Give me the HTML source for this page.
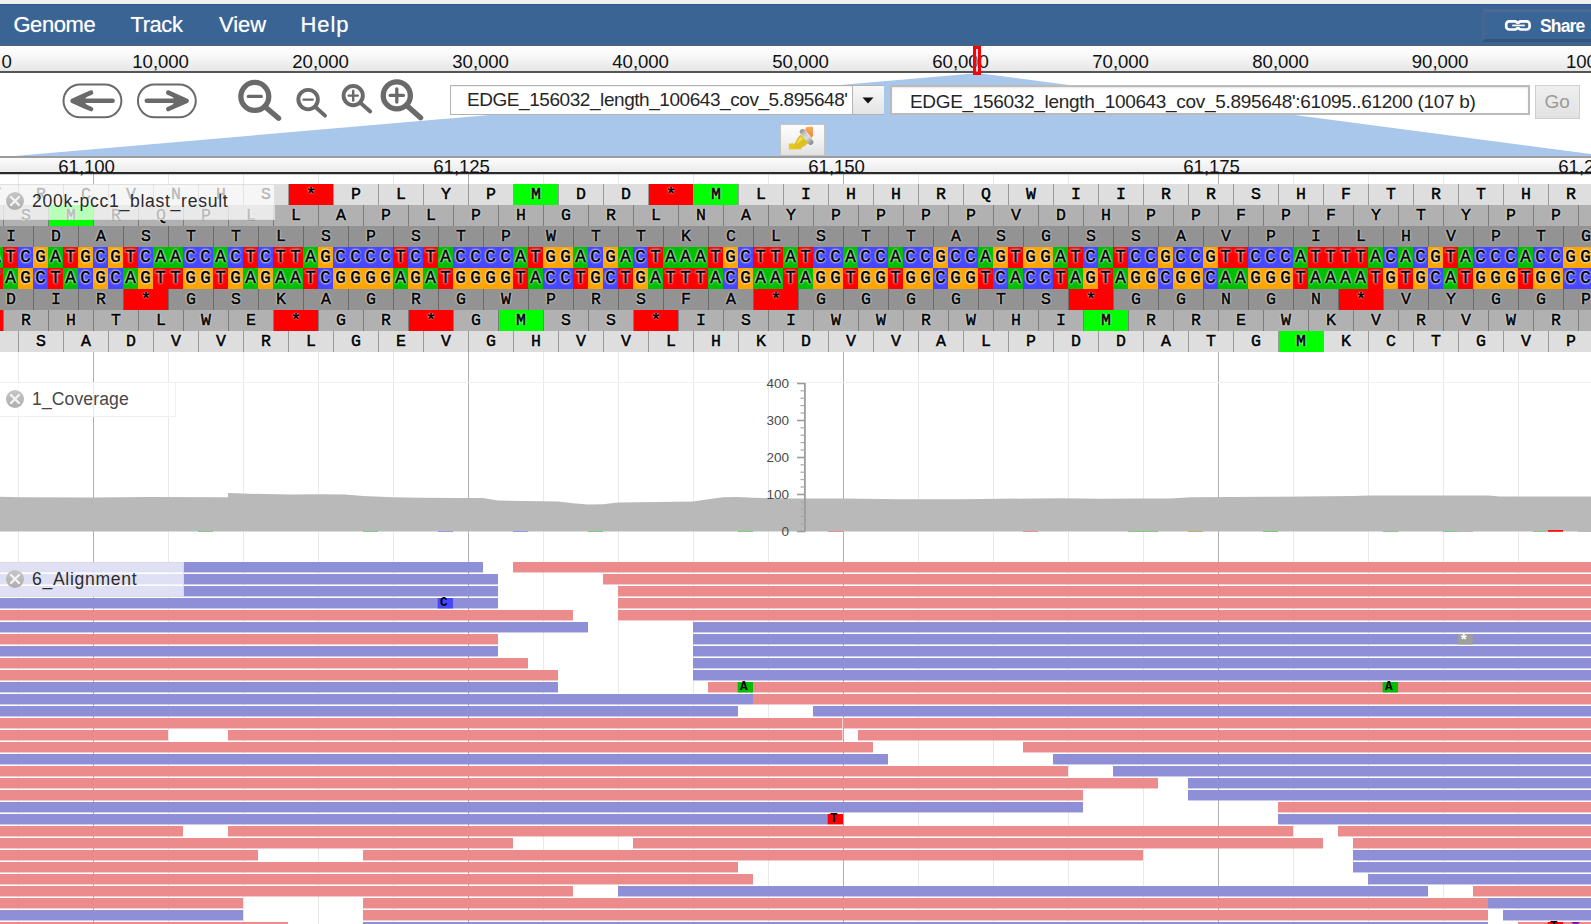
<!DOCTYPE html><html><head><meta charset="utf-8"><title>JBrowse</title><style>
html,body{margin:0;padding:0;}
body{width:1591px;height:924px;overflow:hidden;position:relative;background:#fff;font-family:"Liberation Sans",sans-serif;}
.abs{position:absolute;}
#top{left:0;top:0;width:1591px;height:4px;background:#f0f0f0;border-bottom:0;}
#menubar{left:0;top:4px;width:1591px;height:41px;background:#396494;border-top:1px solid #2f5a90;border-bottom:1px solid #56606c;box-sizing:border-box;height:42px;}
.menu{position:absolute;top:6.6px;color:#fff;font-size:22px;letter-spacing:-0.65px;line-height:26px;white-space:nowrap;text-shadow:0 0 1px rgba(255,255,255,0.55);}
#overview{left:0;top:46px;width:1591px;height:25px;background:linear-gradient(#ffffff,#fcfcfc 25%,#e6e6e6);border-bottom:2px solid #555;box-sizing:content-box;}
.ovl{position:absolute;top:4.9px;font-size:18.6px;letter-spacing:-0.05px;line-height:22px;color:#111;white-space:nowrap;}
#scale{left:0;top:156px;width:1591px;height:14px;border-top:2px solid #9c9c9c;border-bottom:2px solid #2b2b2b;background:linear-gradient(#fcfcfc,#ebebeb);box-shadow:0 1px 0 rgba(60,60,60,0.25);}
.scl{position:absolute;top:155.5px;font-size:18.6px;letter-spacing:-0.05px;line-height:22px;color:#111;white-space:nowrap;}
.tl{position:absolute;left:0;box-sizing:border-box;background:rgba(255,255,255,0.72);border:1px solid rgba(215,215,215,0.7);border-left:0;color:#2c2c2c;font-size:17.6px;white-space:nowrap;}
.tl span{position:absolute;left:32px;top:5.2px;line-height:22px;}
.row{position:absolute;left:0;width:1591px;height:21px;overflow:hidden;}
.aa{position:absolute;top:0;height:21px;width:45px;box-sizing:border-box;border-left:1px solid #777;text-align:center;font-family:"Liberation Mono",monospace;font-weight:normal;-webkit-text-stroke:0.55px #000;font-size:16.5px;line-height:22.6px;color:#000;text-shadow:0 0 2px #fff,0 0 2px #fff;}
.b{position:absolute;top:0;height:21px;width:15px;text-align:center;font-family:"Liberation Mono",monospace;font-weight:normal;-webkit-text-stroke:0.55px #000;font-size:17.5px;line-height:21px;color:#000;text-shadow:0 0 2px #fff,0 0 3px #fff,0 0 2px #fff;}
.bA{background:#00bf00}.bC{background:#4747ff}.bG{background:#ffa500}.bT{background:#ff0000}
.f0{background:#dedede}.f1{background:#b1b1b1}.f2{background:#939393}
.f0 .aa{border-left-color:#9a9a9a}.f1 .aa{border-left-color:#7c7c7c}.f2 .aa{border-left-color:#6a6a6a}
.stop{background:#ff0000}.met{background:#00ff00}
.ylab{position:absolute;width:40px;text-align:right;font-size:13.5px;line-height:14px;color:#4a4a4a;}
</style></head><body>
<svg class="abs" style="left:0;top:173px" width="1591" height="751">
<rect x="18" y="0" width="1" height="751" fill="#e9e9e9"/>
<rect x="93" y="0" width="1" height="751" fill="#e9e9e9"/>
<rect x="168" y="0" width="1" height="751" fill="#e9e9e9"/>
<rect x="243" y="0" width="1" height="751" fill="#e9e9e9"/>
<rect x="318" y="0" width="1" height="751" fill="#e9e9e9"/>
<rect x="393" y="0" width="1" height="751" fill="#e9e9e9"/>
<rect x="468" y="0" width="1" height="751" fill="#e9e9e9"/>
<rect x="543" y="0" width="1" height="751" fill="#e9e9e9"/>
<rect x="618" y="0" width="1" height="751" fill="#e9e9e9"/>
<rect x="693" y="0" width="1" height="751" fill="#e9e9e9"/>
<rect x="768" y="0" width="1" height="751" fill="#e9e9e9"/>
<rect x="843" y="0" width="1" height="751" fill="#e9e9e9"/>
<rect x="918" y="0" width="1" height="751" fill="#e9e9e9"/>
<rect x="993" y="0" width="1" height="751" fill="#e9e9e9"/>
<rect x="1068" y="0" width="1" height="751" fill="#e9e9e9"/>
<rect x="1143" y="0" width="1" height="751" fill="#e9e9e9"/>
<rect x="1218" y="0" width="1" height="751" fill="#e9e9e9"/>
<rect x="1293" y="0" width="1" height="751" fill="#e9e9e9"/>
<rect x="1368" y="0" width="1" height="751" fill="#e9e9e9"/>
<rect x="1443" y="0" width="1" height="751" fill="#e9e9e9"/>
<rect x="1518" y="0" width="1" height="751" fill="#e9e9e9"/>
<rect x="93" y="0" width="1" height="751" fill="#b0b0b0"/>
<rect x="468" y="0" width="1" height="751" fill="#b0b0b0"/>
<rect x="843" y="0" width="1" height="751" fill="#b0b0b0"/>
<rect x="1218" y="0" width="1" height="751" fill="#b0b0b0"/>
</svg>
<div id="top" class="abs"></div>
<div id="menubar" class="abs">
<div class="menu" style="left:13.4px;letter-spacing:-0.42px">Genome</div>
<div class="menu" style="left:130.5px;letter-spacing:-0.45px">Track</div>
<div class="menu" style="left:219px;letter-spacing:-0.05px">View</div>
<div class="menu" style="left:300.5px;letter-spacing:0.9px">Help</div>
<div class="abs" style="left:1482px;top:4px;width:130px;height:33px;border:3px solid;border-color:#4a6a93 #33547e #33547e #46668f;box-sizing:border-box;background:#3a6597"></div>
<svg class="abs" style="left:1504px;top:14px" width="28" height="13" viewBox="1504 19 28 13"><g fill="none" stroke="#fff" stroke-width="2.7"><rect x="1506.2" y="21.4" width="11.6" height="8.1" rx="3"/><rect x="1518" y="21.4" width="11.6" height="8.1" rx="3"/></g><rect x="1511.6" y="24" width="13.4" height="2.9" fill="#396494"/><rect x="1512.2" y="24.6" width="12.6" height="1.7" fill="#fff"/></svg>
<div class="abs" id="sharetxt" style="left:1540px;top:8.5px;color:#fff;font-weight:bold;font-size:17.5px;letter-spacing:-0.85px;line-height:24px;">Share</div>
</div>
<div id="overview" class="abs">
<div class="ovl" style="left:1.5px">0</div>
<div class="ovl" style="left:132.3px">10,000</div>
<div class="ovl" style="left:292.3px">20,000</div>
<div class="ovl" style="left:452.3px">30,000</div>
<div class="ovl" style="left:612.3px">40,000</div>
<div class="ovl" style="left:772.3px">50,000</div>
<div class="ovl" style="left:932.3px">60,000</div>
<div class="ovl" style="left:1092.3px">70,000</div>
<div class="ovl" style="left:1252.3px">80,000</div>
<div class="ovl" style="left:1411.8px">90,000</div>
<div class="ovl" style="left:1566px">100,000</div>
</div>
<svg class="abs" style="left:0;top:72px" width="1591" height="86"><polygon points="976.5,1.2 979,1.2 1620,85.9 0,85.9 0,85.2" fill="#a9c6eb"/></svg>
<div class="abs" style="left:973px;top:46px;width:8px;height:29px;box-sizing:border-box;border:3px solid #ff0000;background:rgba(160,200,240,0.55)"></div>
<svg class="abs" style="left:55px;top:76px" width="380" height="50" viewBox="55 76 380 50">
<rect x="63.5" y="84.4" width="57.9" height="32.9" rx="16.45" fill="#fff" stroke="#6a6a6a" stroke-width="2"/>
<g fill="none" stroke="#6a6a6a" stroke-width="4.6" stroke-linecap="round" stroke-linejoin="round"><path d="M112.6 100.8 H80"/><path d="M91 92.6 Q80 97.4 72.6 100.8 Q80 104.2 91 109"/></g>
<polygon points="71.5,100.8 88,94 84,100.8 88,107.6" fill="#6a6a6a"/>
<rect x="137.9" y="84.4" width="57.9" height="32.9" rx="16.45" fill="#fff" stroke="#6a6a6a" stroke-width="2"/>
<g fill="none" stroke="#6a6a6a" stroke-width="4.6" stroke-linecap="round" stroke-linejoin="round"><path d="M146.8 100.8 H179"/><path d="M168.3 92.6 Q179 97.4 186.6 100.8 Q179 104.2 168.3 109"/></g>
<polygon points="187.7,100.8 171,94 175,100.8 171,107.6" fill="#6a6a6a"/>
<circle cx="254.8" cy="96.4" r="13.950000000000001" fill="#fff" stroke="#6a6a6a" stroke-width="5.3"/><path d="M265.60 107.20 L278.6 118.3" stroke="#6a6a6a" stroke-width="5.3" stroke-linecap="round"/><path d="M248.3 96.4 H261.3" stroke="#6a6a6a" stroke-width="3.3" stroke-linecap="round"/>
<circle cx="308.1" cy="99.6" r="9.75" fill="#fff" stroke="#6a6a6a" stroke-width="3.9"/><path d="M315.68 107.18 L325 115.6" stroke="#6a6a6a" stroke-width="3.9" stroke-linecap="round"/><path d="M303.6 99.6 H312.6" stroke="#6a6a6a" stroke-width="2.4" stroke-linecap="round"/>
<circle cx="353.2" cy="95.6" r="9.65" fill="#fff" stroke="#6a6a6a" stroke-width="3.9"/><path d="M360.71 103.11 L370.2 111.5" stroke="#6a6a6a" stroke-width="3.9" stroke-linecap="round"/><path d="M348.59999999999997 95.6 H357.8" stroke="#6a6a6a" stroke-width="2.4" stroke-linecap="round"/><path d="M353.2 90.69999999999999 V100.5" stroke="#6a6a6a" stroke-width="2.4" stroke-linecap="round"/>
<circle cx="396.8" cy="95.4" r="13.549999999999999" fill="#fff" stroke="#6a6a6a" stroke-width="5.3"/><path d="M407.32 105.92 L420.6 117.7" stroke="#6a6a6a" stroke-width="5.3" stroke-linecap="round"/><path d="M390.2 95.4 H403.40000000000003" stroke="#6a6a6a" stroke-width="3.3" stroke-linecap="round"/><path d="M396.8 88.80000000000001 V102.0" stroke="#6a6a6a" stroke-width="3.3" stroke-linecap="round"/>
</svg>
<div class="abs" style="left:449.5px;top:84.6px;width:434.5px;height:30px;box-sizing:border-box;border:1.5px solid #b2b2b2;background:#fff;box-shadow:inset 0 1px 1px rgba(0,0,0,0.06);"></div>
<div class="abs" style="left:852px;top:86px;width:31px;height:27.5px;background:linear-gradient(#f8f8f8,#e4e4e4);border-left:1px solid #b4b4b4;"></div>
<svg class="abs" style="left:862px;top:97px" width="12" height="8"><polygon points="0.5,0.5 11.5,0.5 6,6.5" fill="#111"/></svg>
<div class="abs" id="seltxt" style="left:467px;top:88.2px;font-size:19px;letter-spacing:-0.44px;line-height:24px;color:#262626;white-space:nowrap;">EDGE_156032_length_100643_cov_5.895648'</div>
<div class="abs" style="left:890px;top:85px;width:640px;height:29.5px;box-sizing:border-box;border:2px solid #bababa;background:#fff;box-shadow:inset 0 1px 2px rgba(0,0,0,0.10)"></div>
<div class="abs" id="loctxt" style="left:910px;top:90.3px;font-size:19px;letter-spacing:-0.32px;line-height:24px;color:#262626;white-space:nowrap;">EDGE_156032_length_100643_cov_5.895648':61095..61200 (107 b)</div>
<div class="abs" style="left:1534.5px;top:84.5px;width:45.5px;height:34px;box-sizing:border-box;border:1.5px solid #cfcfcf;background:linear-gradient(#efefef,#e2e2e2);color:#9a9a9a;font-size:19px;line-height:32px;text-align:center;">Go</div>
<div class="abs" style="left:780.3px;top:124.2px;width:44.5px;height:32px;box-sizing:border-box;border:1.4px solid #c4c4c4;background:linear-gradient(#fdfdfd,#f4f4f4 45%,#e1e1e1);"></div>
<svg class="abs" style="left:785px;top:124px" width="34" height="30" viewBox="785 124 34 30"><defs><linearGradient id="hg" gradientUnits="userSpaceOnUse" x1="801" y1="130" x2="812" y2="144"><stop offset="0" stop-color="#8f918f"/><stop offset="0.3" stop-color="#c9c9c9"/><stop offset="0.55" stop-color="#dedede"/><stop offset="1" stop-color="#858785"/></linearGradient><linearGradient id="og" x1="0" y1="0" x2="0" y2="1"><stop offset="0" stop-color="#f7a85a"/><stop offset="1" stop-color="#ee8a3a"/></linearGradient></defs><rect x="788.8" y="143.5" width="12.6" height="5.9" fill="#e6c81f"/><path d="M794.2,146.9 Q795.4,139.6 800.6,134.6 L808.8,142.7 Q804.5,146.8 799.5,148.4 Z" fill="#dfc024"/><path d="M796.6,144.6 Q797.6,140 800.8,136.6 L803.4,139.2 Q799.5,141.5 796.6,144.6 Z" fill="#efdc4a"/><polygon points="804.8,129.6 806.7,127 812.9,126.8 813.1,135.6 811.6,138" fill="url(#og)"/><path d="M802.5,131.8 L810.6,142" stroke="url(#hg)" stroke-width="5.5" stroke-linecap="round" fill="none"/></svg>
<div id="scale" class="abs"></div>
<div class="scl" style="left:58.3px">61,100</div>
<div class="scl" style="left:433.3px">61,125</div>
<div class="scl" style="left:808.3px">61,150</div>
<div class="scl" style="left:1183.3px">61,175</div>
<div class="scl" style="left:1558.3px">61,200</div>
<div class="row f0" style="top:184px">
<div class="aa" style="left:-27px">Y</div>
<div class="aa" style="left:18px">R</div>
<div class="aa" style="left:63px">C</div>
<div class="aa" style="left:108px">V</div>
<div class="aa" style="left:153px">N</div>
<div class="aa" style="left:198px">H</div>
<div class="aa" style="left:243px">S</div>
<div class="aa stop" style="left:288px">*</div>
<div class="aa" style="left:333px">P</div>
<div class="aa" style="left:378px">L</div>
<div class="aa" style="left:423px">Y</div>
<div class="aa" style="left:468px">P</div>
<div class="aa met" style="left:513px">M</div>
<div class="aa" style="left:558px">D</div>
<div class="aa" style="left:603px">D</div>
<div class="aa stop" style="left:648px">*</div>
<div class="aa met" style="left:693px">M</div>
<div class="aa" style="left:738px">L</div>
<div class="aa" style="left:783px">I</div>
<div class="aa" style="left:828px">H</div>
<div class="aa" style="left:873px">H</div>
<div class="aa" style="left:918px">R</div>
<div class="aa" style="left:963px">Q</div>
<div class="aa" style="left:1008px">W</div>
<div class="aa" style="left:1053px">I</div>
<div class="aa" style="left:1098px">I</div>
<div class="aa" style="left:1143px">R</div>
<div class="aa" style="left:1188px">R</div>
<div class="aa" style="left:1233px">S</div>
<div class="aa" style="left:1278px">H</div>
<div class="aa" style="left:1323px">F</div>
<div class="aa" style="left:1368px">T</div>
<div class="aa" style="left:1413px">R</div>
<div class="aa" style="left:1458px">T</div>
<div class="aa" style="left:1503px">H</div>
<div class="aa" style="left:1548px">R</div>
</div>
<div class="row f1" style="top:205px">
<div class="aa" style="left:-42px">L</div>
<div class="aa" style="left:3px">S</div>
<div class="aa met" style="left:48px">M</div>
<div class="aa" style="left:93px">R</div>
<div class="aa" style="left:138px">Q</div>
<div class="aa" style="left:183px">P</div>
<div class="aa" style="left:228px">L</div>
<div class="aa" style="left:273px">L</div>
<div class="aa" style="left:318px">A</div>
<div class="aa" style="left:363px">P</div>
<div class="aa" style="left:408px">L</div>
<div class="aa" style="left:453px">P</div>
<div class="aa" style="left:498px">H</div>
<div class="aa" style="left:543px">G</div>
<div class="aa" style="left:588px">R</div>
<div class="aa" style="left:633px">L</div>
<div class="aa" style="left:678px">N</div>
<div class="aa" style="left:723px">A</div>
<div class="aa" style="left:768px">Y</div>
<div class="aa" style="left:813px">P</div>
<div class="aa" style="left:858px">P</div>
<div class="aa" style="left:903px">P</div>
<div class="aa" style="left:948px">P</div>
<div class="aa" style="left:993px">V</div>
<div class="aa" style="left:1038px">D</div>
<div class="aa" style="left:1083px">H</div>
<div class="aa" style="left:1128px">P</div>
<div class="aa" style="left:1173px">P</div>
<div class="aa" style="left:1218px">F</div>
<div class="aa" style="left:1263px">P</div>
<div class="aa" style="left:1308px">F</div>
<div class="aa" style="left:1353px">Y</div>
<div class="aa" style="left:1398px">T</div>
<div class="aa" style="left:1443px">Y</div>
<div class="aa" style="left:1488px">P</div>
<div class="aa" style="left:1533px">P</div>
<div class="aa" style="left:1578px">G</div>
</div>
<div class="row f2" style="top:226px">
<div class="aa" style="left:-12px">I</div>
<div class="aa" style="left:33px">D</div>
<div class="aa" style="left:78px">A</div>
<div class="aa" style="left:123px">S</div>
<div class="aa" style="left:168px">T</div>
<div class="aa" style="left:213px">T</div>
<div class="aa" style="left:258px">L</div>
<div class="aa" style="left:303px">S</div>
<div class="aa" style="left:348px">P</div>
<div class="aa" style="left:393px">S</div>
<div class="aa" style="left:438px">T</div>
<div class="aa" style="left:483px">P</div>
<div class="aa" style="left:528px">W</div>
<div class="aa" style="left:573px">T</div>
<div class="aa" style="left:618px">T</div>
<div class="aa" style="left:663px">K</div>
<div class="aa" style="left:708px">C</div>
<div class="aa" style="left:753px">L</div>
<div class="aa" style="left:798px">S</div>
<div class="aa" style="left:843px">T</div>
<div class="aa" style="left:888px">T</div>
<div class="aa" style="left:933px">A</div>
<div class="aa" style="left:978px">S</div>
<div class="aa" style="left:1023px">G</div>
<div class="aa" style="left:1068px">S</div>
<div class="aa" style="left:1113px">S</div>
<div class="aa" style="left:1158px">A</div>
<div class="aa" style="left:1203px">V</div>
<div class="aa" style="left:1248px">P</div>
<div class="aa" style="left:1293px">I</div>
<div class="aa" style="left:1338px">L</div>
<div class="aa" style="left:1383px">H</div>
<div class="aa" style="left:1428px">V</div>
<div class="aa" style="left:1473px">P</div>
<div class="aa" style="left:1518px">T</div>
<div class="aa" style="left:1563px">G</div>
</div>
<div class="row" style="top:247px">
<div class="b bA" style="left:-12px">A</div>
<div class="b bT" style="left:3px">T</div>
<div class="b bC" style="left:18px">C</div>
<div class="b bG" style="left:33px">G</div>
<div class="b bA" style="left:48px">A</div>
<div class="b bT" style="left:63px">T</div>
<div class="b bG" style="left:78px">G</div>
<div class="b bC" style="left:93px">C</div>
<div class="b bG" style="left:108px">G</div>
<div class="b bT" style="left:123px">T</div>
<div class="b bC" style="left:138px">C</div>
<div class="b bA" style="left:153px">A</div>
<div class="b bA" style="left:168px">A</div>
<div class="b bC" style="left:183px">C</div>
<div class="b bC" style="left:198px">C</div>
<div class="b bA" style="left:213px">A</div>
<div class="b bC" style="left:228px">C</div>
<div class="b bT" style="left:243px">T</div>
<div class="b bC" style="left:258px">C</div>
<div class="b bT" style="left:273px">T</div>
<div class="b bT" style="left:288px">T</div>
<div class="b bA" style="left:303px">A</div>
<div class="b bG" style="left:318px">G</div>
<div class="b bC" style="left:333px">C</div>
<div class="b bC" style="left:348px">C</div>
<div class="b bC" style="left:363px">C</div>
<div class="b bC" style="left:378px">C</div>
<div class="b bT" style="left:393px">T</div>
<div class="b bC" style="left:408px">C</div>
<div class="b bT" style="left:423px">T</div>
<div class="b bA" style="left:438px">A</div>
<div class="b bC" style="left:453px">C</div>
<div class="b bC" style="left:468px">C</div>
<div class="b bC" style="left:483px">C</div>
<div class="b bC" style="left:498px">C</div>
<div class="b bA" style="left:513px">A</div>
<div class="b bT" style="left:528px">T</div>
<div class="b bG" style="left:543px">G</div>
<div class="b bG" style="left:558px">G</div>
<div class="b bA" style="left:573px">A</div>
<div class="b bC" style="left:588px">C</div>
<div class="b bG" style="left:603px">G</div>
<div class="b bA" style="left:618px">A</div>
<div class="b bC" style="left:633px">C</div>
<div class="b bT" style="left:648px">T</div>
<div class="b bA" style="left:663px">A</div>
<div class="b bA" style="left:678px">A</div>
<div class="b bA" style="left:693px">A</div>
<div class="b bT" style="left:708px">T</div>
<div class="b bG" style="left:723px">G</div>
<div class="b bC" style="left:738px">C</div>
<div class="b bT" style="left:753px">T</div>
<div class="b bT" style="left:768px">T</div>
<div class="b bA" style="left:783px">A</div>
<div class="b bT" style="left:798px">T</div>
<div class="b bC" style="left:813px">C</div>
<div class="b bC" style="left:828px">C</div>
<div class="b bA" style="left:843px">A</div>
<div class="b bC" style="left:858px">C</div>
<div class="b bC" style="left:873px">C</div>
<div class="b bA" style="left:888px">A</div>
<div class="b bC" style="left:903px">C</div>
<div class="b bC" style="left:918px">C</div>
<div class="b bG" style="left:933px">G</div>
<div class="b bC" style="left:948px">C</div>
<div class="b bC" style="left:963px">C</div>
<div class="b bA" style="left:978px">A</div>
<div class="b bG" style="left:993px">G</div>
<div class="b bT" style="left:1008px">T</div>
<div class="b bG" style="left:1023px">G</div>
<div class="b bG" style="left:1038px">G</div>
<div class="b bA" style="left:1053px">A</div>
<div class="b bT" style="left:1068px">T</div>
<div class="b bC" style="left:1083px">C</div>
<div class="b bA" style="left:1098px">A</div>
<div class="b bT" style="left:1113px">T</div>
<div class="b bC" style="left:1128px">C</div>
<div class="b bC" style="left:1143px">C</div>
<div class="b bG" style="left:1158px">G</div>
<div class="b bC" style="left:1173px">C</div>
<div class="b bC" style="left:1188px">C</div>
<div class="b bG" style="left:1203px">G</div>
<div class="b bT" style="left:1218px">T</div>
<div class="b bT" style="left:1233px">T</div>
<div class="b bC" style="left:1248px">C</div>
<div class="b bC" style="left:1263px">C</div>
<div class="b bC" style="left:1278px">C</div>
<div class="b bA" style="left:1293px">A</div>
<div class="b bT" style="left:1308px">T</div>
<div class="b bT" style="left:1323px">T</div>
<div class="b bT" style="left:1338px">T</div>
<div class="b bT" style="left:1353px">T</div>
<div class="b bA" style="left:1368px">A</div>
<div class="b bC" style="left:1383px">C</div>
<div class="b bA" style="left:1398px">A</div>
<div class="b bC" style="left:1413px">C</div>
<div class="b bG" style="left:1428px">G</div>
<div class="b bT" style="left:1443px">T</div>
<div class="b bA" style="left:1458px">A</div>
<div class="b bC" style="left:1473px">C</div>
<div class="b bC" style="left:1488px">C</div>
<div class="b bC" style="left:1503px">C</div>
<div class="b bA" style="left:1518px">A</div>
<div class="b bC" style="left:1533px">C</div>
<div class="b bC" style="left:1548px">C</div>
<div class="b bG" style="left:1563px">G</div>
<div class="b bG" style="left:1578px">G</div>
</div>
<div class="row" style="top:268px">
<div class="b bT" style="left:-12px">T</div>
<div class="b bA" style="left:3px">A</div>
<div class="b bG" style="left:18px">G</div>
<div class="b bC" style="left:33px">C</div>
<div class="b bT" style="left:48px">T</div>
<div class="b bA" style="left:63px">A</div>
<div class="b bC" style="left:78px">C</div>
<div class="b bG" style="left:93px">G</div>
<div class="b bC" style="left:108px">C</div>
<div class="b bA" style="left:123px">A</div>
<div class="b bG" style="left:138px">G</div>
<div class="b bT" style="left:153px">T</div>
<div class="b bT" style="left:168px">T</div>
<div class="b bG" style="left:183px">G</div>
<div class="b bG" style="left:198px">G</div>
<div class="b bT" style="left:213px">T</div>
<div class="b bG" style="left:228px">G</div>
<div class="b bA" style="left:243px">A</div>
<div class="b bG" style="left:258px">G</div>
<div class="b bA" style="left:273px">A</div>
<div class="b bA" style="left:288px">A</div>
<div class="b bT" style="left:303px">T</div>
<div class="b bC" style="left:318px">C</div>
<div class="b bG" style="left:333px">G</div>
<div class="b bG" style="left:348px">G</div>
<div class="b bG" style="left:363px">G</div>
<div class="b bG" style="left:378px">G</div>
<div class="b bA" style="left:393px">A</div>
<div class="b bG" style="left:408px">G</div>
<div class="b bA" style="left:423px">A</div>
<div class="b bT" style="left:438px">T</div>
<div class="b bG" style="left:453px">G</div>
<div class="b bG" style="left:468px">G</div>
<div class="b bG" style="left:483px">G</div>
<div class="b bG" style="left:498px">G</div>
<div class="b bT" style="left:513px">T</div>
<div class="b bA" style="left:528px">A</div>
<div class="b bC" style="left:543px">C</div>
<div class="b bC" style="left:558px">C</div>
<div class="b bT" style="left:573px">T</div>
<div class="b bG" style="left:588px">G</div>
<div class="b bC" style="left:603px">C</div>
<div class="b bT" style="left:618px">T</div>
<div class="b bG" style="left:633px">G</div>
<div class="b bA" style="left:648px">A</div>
<div class="b bT" style="left:663px">T</div>
<div class="b bT" style="left:678px">T</div>
<div class="b bT" style="left:693px">T</div>
<div class="b bA" style="left:708px">A</div>
<div class="b bC" style="left:723px">C</div>
<div class="b bG" style="left:738px">G</div>
<div class="b bA" style="left:753px">A</div>
<div class="b bA" style="left:768px">A</div>
<div class="b bT" style="left:783px">T</div>
<div class="b bA" style="left:798px">A</div>
<div class="b bG" style="left:813px">G</div>
<div class="b bG" style="left:828px">G</div>
<div class="b bT" style="left:843px">T</div>
<div class="b bG" style="left:858px">G</div>
<div class="b bG" style="left:873px">G</div>
<div class="b bT" style="left:888px">T</div>
<div class="b bG" style="left:903px">G</div>
<div class="b bG" style="left:918px">G</div>
<div class="b bC" style="left:933px">C</div>
<div class="b bG" style="left:948px">G</div>
<div class="b bG" style="left:963px">G</div>
<div class="b bT" style="left:978px">T</div>
<div class="b bC" style="left:993px">C</div>
<div class="b bA" style="left:1008px">A</div>
<div class="b bC" style="left:1023px">C</div>
<div class="b bC" style="left:1038px">C</div>
<div class="b bT" style="left:1053px">T</div>
<div class="b bA" style="left:1068px">A</div>
<div class="b bG" style="left:1083px">G</div>
<div class="b bT" style="left:1098px">T</div>
<div class="b bA" style="left:1113px">A</div>
<div class="b bG" style="left:1128px">G</div>
<div class="b bG" style="left:1143px">G</div>
<div class="b bC" style="left:1158px">C</div>
<div class="b bG" style="left:1173px">G</div>
<div class="b bG" style="left:1188px">G</div>
<div class="b bC" style="left:1203px">C</div>
<div class="b bA" style="left:1218px">A</div>
<div class="b bA" style="left:1233px">A</div>
<div class="b bG" style="left:1248px">G</div>
<div class="b bG" style="left:1263px">G</div>
<div class="b bG" style="left:1278px">G</div>
<div class="b bT" style="left:1293px">T</div>
<div class="b bA" style="left:1308px">A</div>
<div class="b bA" style="left:1323px">A</div>
<div class="b bA" style="left:1338px">A</div>
<div class="b bA" style="left:1353px">A</div>
<div class="b bT" style="left:1368px">T</div>
<div class="b bG" style="left:1383px">G</div>
<div class="b bT" style="left:1398px">T</div>
<div class="b bG" style="left:1413px">G</div>
<div class="b bC" style="left:1428px">C</div>
<div class="b bA" style="left:1443px">A</div>
<div class="b bT" style="left:1458px">T</div>
<div class="b bG" style="left:1473px">G</div>
<div class="b bG" style="left:1488px">G</div>
<div class="b bG" style="left:1503px">G</div>
<div class="b bT" style="left:1518px">T</div>
<div class="b bG" style="left:1533px">G</div>
<div class="b bG" style="left:1548px">G</div>
<div class="b bC" style="left:1563px">C</div>
<div class="b bC" style="left:1578px">C</div>
</div>
<div class="row f2" style="top:289px">
<div class="aa" style="left:-12px">D</div>
<div class="aa" style="left:33px">I</div>
<div class="aa" style="left:78px">R</div>
<div class="aa stop" style="left:123px">*</div>
<div class="aa" style="left:168px">G</div>
<div class="aa" style="left:213px">S</div>
<div class="aa" style="left:258px">K</div>
<div class="aa" style="left:303px">A</div>
<div class="aa" style="left:348px">G</div>
<div class="aa" style="left:393px">R</div>
<div class="aa" style="left:438px">G</div>
<div class="aa" style="left:483px">W</div>
<div class="aa" style="left:528px">P</div>
<div class="aa" style="left:573px">R</div>
<div class="aa" style="left:618px">S</div>
<div class="aa" style="left:663px">F</div>
<div class="aa" style="left:708px">A</div>
<div class="aa stop" style="left:753px">*</div>
<div class="aa" style="left:798px">G</div>
<div class="aa" style="left:843px">G</div>
<div class="aa" style="left:888px">G</div>
<div class="aa" style="left:933px">G</div>
<div class="aa" style="left:978px">T</div>
<div class="aa" style="left:1023px">S</div>
<div class="aa stop" style="left:1068px">*</div>
<div class="aa" style="left:1113px">G</div>
<div class="aa" style="left:1158px">G</div>
<div class="aa" style="left:1203px">N</div>
<div class="aa" style="left:1248px">G</div>
<div class="aa" style="left:1293px">N</div>
<div class="aa stop" style="left:1338px">*</div>
<div class="aa" style="left:1383px">V</div>
<div class="aa" style="left:1428px">Y</div>
<div class="aa" style="left:1473px">G</div>
<div class="aa" style="left:1518px">G</div>
<div class="aa" style="left:1563px">P</div>
</div>
<div class="row f1" style="top:310px">
<div class="aa stop" style="left:-42px">*</div>
<div class="aa" style="left:3px">R</div>
<div class="aa" style="left:48px">H</div>
<div class="aa" style="left:93px">T</div>
<div class="aa" style="left:138px">L</div>
<div class="aa" style="left:183px">W</div>
<div class="aa" style="left:228px">E</div>
<div class="aa stop" style="left:273px">*</div>
<div class="aa" style="left:318px">G</div>
<div class="aa" style="left:363px">R</div>
<div class="aa stop" style="left:408px">*</div>
<div class="aa" style="left:453px">G</div>
<div class="aa met" style="left:498px">M</div>
<div class="aa" style="left:543px">S</div>
<div class="aa" style="left:588px">S</div>
<div class="aa stop" style="left:633px">*</div>
<div class="aa" style="left:678px">I</div>
<div class="aa" style="left:723px">S</div>
<div class="aa" style="left:768px">I</div>
<div class="aa" style="left:813px">W</div>
<div class="aa" style="left:858px">W</div>
<div class="aa" style="left:903px">R</div>
<div class="aa" style="left:948px">W</div>
<div class="aa" style="left:993px">H</div>
<div class="aa" style="left:1038px">I</div>
<div class="aa met" style="left:1083px">M</div>
<div class="aa" style="left:1128px">R</div>
<div class="aa" style="left:1173px">R</div>
<div class="aa" style="left:1218px">E</div>
<div class="aa" style="left:1263px">W</div>
<div class="aa" style="left:1308px">K</div>
<div class="aa" style="left:1353px">V</div>
<div class="aa" style="left:1398px">R</div>
<div class="aa" style="left:1443px">V</div>
<div class="aa" style="left:1488px">W</div>
<div class="aa" style="left:1533px">R</div>
<div class="aa" style="left:1578px">P</div>
</div>
<div class="row f0" style="top:331px">
<div class="aa" style="left:-27px">I</div>
<div class="aa" style="left:18px">S</div>
<div class="aa" style="left:63px">A</div>
<div class="aa" style="left:108px">D</div>
<div class="aa" style="left:153px">V</div>
<div class="aa" style="left:198px">V</div>
<div class="aa" style="left:243px">R</div>
<div class="aa" style="left:288px">L</div>
<div class="aa" style="left:333px">G</div>
<div class="aa" style="left:378px">E</div>
<div class="aa" style="left:423px">V</div>
<div class="aa" style="left:468px">G</div>
<div class="aa" style="left:513px">H</div>
<div class="aa" style="left:558px">V</div>
<div class="aa" style="left:603px">V</div>
<div class="aa" style="left:648px">L</div>
<div class="aa" style="left:693px">H</div>
<div class="aa" style="left:738px">K</div>
<div class="aa" style="left:783px">D</div>
<div class="aa" style="left:828px">V</div>
<div class="aa" style="left:873px">V</div>
<div class="aa" style="left:918px">A</div>
<div class="aa" style="left:963px">L</div>
<div class="aa" style="left:1008px">P</div>
<div class="aa" style="left:1053px">D</div>
<div class="aa" style="left:1098px">D</div>
<div class="aa" style="left:1143px">A</div>
<div class="aa" style="left:1188px">T</div>
<div class="aa" style="left:1233px">G</div>
<div class="aa met" style="left:1278px">M</div>
<div class="aa" style="left:1323px">K</div>
<div class="aa" style="left:1368px">C</div>
<div class="aa" style="left:1413px">T</div>
<div class="aa" style="left:1458px">G</div>
<div class="aa" style="left:1503px">V</div>
<div class="aa" style="left:1548px">P</div>
</div>
<div class="abs" style="left:0;top:382px;width:1591px;height:1px;background:#f0f0f0"></div>
<svg class="abs" style="left:0;top:480px" width="1591" height="54"><polygon points="0,51.6 0,16.8 18,17.2 93,17.4 150,17.0 228,17.2 228,13.0 243,13.6 290,14.6 318,14.2 345,14.4 363,16.0 393,17.3 420,17.8 453,18.0 483,18.0 498,20.5 558,21.5 573,23.3 588,24.4 603,24.2 618,22.6 693,21.6 708,19.2 723,17.2 738,17.0 753,17.8 798,18.4 843,18.6 900,19.3 960,19.3 1000,18.8 1060,18.2 1100,18.8 1140,18.6 1170,18.4 1191,17.2 1280,16.8 1353,16.0 1370,15.6 1430,15.6 1488,15.6 1500,16.4 1591,16.4 1591,51.6" fill="#b9b9b9"/>
<rect x="198" y="51" width="15" height="0.7" fill="#3fbf3f" opacity="0.85"/>
<rect x="363" y="51" width="15" height="0.7" fill="#3fbf3f" opacity="0.85"/>
<rect x="438" y="51" width="15" height="0.7" fill="#6b6bf0" opacity="0.85"/>
<rect x="513" y="51" width="15" height="0.7" fill="#6b6bf0" opacity="0.85"/>
<rect x="588" y="51" width="15" height="0.7" fill="#3fbf3f" opacity="0.85"/>
<rect x="738" y="51" width="15" height="0.7" fill="#3fbf3f" opacity="0.85"/>
<rect x="828" y="51" width="15" height="0.7" fill="#e86060" opacity="0.85"/>
<rect x="1023" y="51" width="15" height="0.7" fill="#e86060" opacity="0.85"/>
<rect x="1128" y="51" width="15" height="0.7" fill="#3fbf3f" opacity="0.85"/>
<rect x="1143" y="51" width="15" height="0.7" fill="#3fbf3f" opacity="0.85"/>
<rect x="1188" y="51" width="15" height="0.7" fill="#c08a20" opacity="0.85"/>
<rect x="1263" y="51" width="15" height="0.7" fill="#2fbf2f" opacity="0.85"/>
<rect x="1383" y="51" width="15" height="0.7" fill="#4fbf4f" opacity="0.85"/>
<rect x="1443" y="51" width="15" height="0.7" fill="#4fbf4f" opacity="0.85"/>
<rect x="1458" y="51" width="15" height="0.7" fill="#a0a0a0" opacity="0.85"/>
<rect x="1533" y="51" width="15" height="0.7" fill="#4fbf4f" opacity="0.85"/>
<rect x="1578" y="51" width="15" height="0.7" fill="#a0a0a0" opacity="0.85"/>
<rect x="1548" y="50" width="15" height="1.8" fill="#ff1010"/>
</svg>
<svg class="abs" style="left:790px;top:378px" width="20" height="160" viewBox="790 378 20 160">
<rect x="804" y="383" width="1.8" height="148.8" fill="#9c9c9c"/>
<rect x="797" y="382.7" width="8" height="1.6" fill="#9c9c9c"/>
<rect x="800.5" y="390.2" width="4.5" height="1.2" fill="#a8a8a8"/>
<rect x="800.5" y="397.6" width="4.5" height="1.2" fill="#a8a8a8"/>
<rect x="800.5" y="405.0" width="4.5" height="1.2" fill="#a8a8a8"/>
<rect x="800.5" y="412.4" width="4.5" height="1.2" fill="#a8a8a8"/>
<rect x="797" y="419.7" width="8" height="1.6" fill="#9c9c9c"/>
<rect x="800.5" y="427.2" width="4.5" height="1.2" fill="#a8a8a8"/>
<rect x="800.5" y="434.6" width="4.5" height="1.2" fill="#a8a8a8"/>
<rect x="800.5" y="442.0" width="4.5" height="1.2" fill="#a8a8a8"/>
<rect x="800.5" y="449.4" width="4.5" height="1.2" fill="#a8a8a8"/>
<rect x="797" y="456.7" width="8" height="1.6" fill="#9c9c9c"/>
<rect x="800.5" y="464.2" width="4.5" height="1.2" fill="#a8a8a8"/>
<rect x="800.5" y="471.6" width="4.5" height="1.2" fill="#a8a8a8"/>
<rect x="800.5" y="479.0" width="4.5" height="1.2" fill="#a8a8a8"/>
<rect x="800.5" y="486.4" width="4.5" height="1.2" fill="#a8a8a8"/>
<rect x="797" y="493.7" width="8" height="1.6" fill="#9c9c9c"/>
<rect x="800.5" y="501.2" width="4.5" height="1.2" fill="#a8a8a8"/>
<rect x="800.5" y="508.6" width="4.5" height="1.2" fill="#a8a8a8"/>
<rect x="800.5" y="516.0" width="4.5" height="1.2" fill="#a8a8a8"/>
<rect x="800.5" y="523.4" width="4.5" height="1.2" fill="#a8a8a8"/>
<rect x="797" y="530.7" width="8" height="1.6" fill="#9c9c9c"/>
</svg>
<div class="ylab" style="left:749px;top:376.5px">400</div>
<div class="ylab" style="left:749px;top:413.5px">300</div>
<div class="ylab" style="left:749px;top:450.5px">200</div>
<div class="ylab" style="left:749px;top:487.5px">100</div>
<div class="ylab" style="left:749px;top:524.5px">0</div>
<svg class="abs" style="left:0;top:560px" width="1591" height="364">
<rect x="-5" y="2" width="488" height="10.45" fill="#8f8fd8"/>
<rect x="513" y="2" width="1087" height="10.45" fill="#ec8b8b"/>
<rect x="-5" y="14" width="503" height="10.45" fill="#8f8fd8"/>
<rect x="603" y="14" width="997" height="10.45" fill="#ec8b8b"/>
<rect x="-5" y="26" width="503" height="10.45" fill="#8f8fd8"/>
<rect x="618" y="26" width="982" height="10.45" fill="#ec8b8b"/>
<rect x="-5" y="38" width="503" height="10.45" fill="#8f8fd8"/>
<rect x="618" y="38" width="982" height="10.45" fill="#ec8b8b"/>
<rect x="-5" y="50" width="578" height="10.45" fill="#ec8b8b"/>
<rect x="618" y="50" width="982" height="10.45" fill="#ec8b8b"/>
<rect x="-5" y="62" width="593" height="10.45" fill="#8f8fd8"/>
<rect x="693" y="62" width="907" height="10.45" fill="#8f8fd8"/>
<rect x="-5" y="74" width="503" height="10.45" fill="#ec8b8b"/>
<rect x="693" y="74" width="907" height="10.45" fill="#8f8fd8"/>
<rect x="-5" y="86" width="503" height="10.45" fill="#8f8fd8"/>
<rect x="693" y="86" width="907" height="10.45" fill="#8f8fd8"/>
<rect x="-5" y="98" width="533" height="10.45" fill="#ec8b8b"/>
<rect x="693" y="98" width="907" height="10.45" fill="#8f8fd8"/>
<rect x="-5" y="110" width="563" height="10.45" fill="#ec8b8b"/>
<rect x="693" y="110" width="907" height="10.45" fill="#8f8fd8"/>
<rect x="-5" y="122" width="563" height="10.45" fill="#8f8fd8"/>
<rect x="708" y="122" width="892" height="10.45" fill="#ec8b8b"/>
<rect x="-5" y="134" width="758" height="10.45" fill="#8f8fd8"/>
<rect x="753" y="134" width="847" height="10.45" fill="#ec8b8b"/>
<rect x="-5" y="146" width="743" height="10.45" fill="#8f8fd8"/>
<rect x="813" y="146" width="787" height="10.45" fill="#8f8fd8"/>
<rect x="-5" y="158" width="847.4" height="10.45" fill="#ec8b8b"/>
<rect x="843.6" y="158" width="756.4" height="10.45" fill="#ec8b8b"/>
<rect x="-5" y="170" width="173" height="10.45" fill="#ec8b8b"/>
<rect x="228" y="170" width="614.4" height="10.45" fill="#ec8b8b"/>
<rect x="858" y="170" width="742" height="10.45" fill="#ec8b8b"/>
<rect x="-5" y="182" width="878" height="10.45" fill="#ec8b8b"/>
<rect x="1023" y="182" width="577" height="10.45" fill="#ec8b8b"/>
<rect x="-5" y="194" width="893" height="10.45" fill="#8f8fd8"/>
<rect x="1053" y="194" width="547" height="10.45" fill="#8f8fd8"/>
<rect x="-5" y="206" width="1073" height="10.45" fill="#ec8b8b"/>
<rect x="1113" y="206" width="487" height="10.45" fill="#8f8fd8"/>
<rect x="-5" y="218" width="1163" height="10.45" fill="#ec8b8b"/>
<rect x="1188" y="218" width="412" height="10.45" fill="#8f8fd8"/>
<rect x="-5" y="230" width="1088" height="10.45" fill="#ec8b8b"/>
<rect x="1188" y="230" width="412" height="10.45" fill="#8f8fd8"/>
<rect x="-5" y="242" width="1088" height="10.45" fill="#8f8fd8"/>
<rect x="1278" y="242" width="322" height="10.45" fill="#ec8b8b"/>
<rect x="-5" y="254" width="833" height="10.45" fill="#8f8fd8"/>
<rect x="1278" y="254" width="322" height="10.45" fill="#8f8fd8"/>
<rect x="-5" y="266" width="188" height="10.45" fill="#ec8b8b"/>
<rect x="228" y="266" width="1065" height="10.45" fill="#ec8b8b"/>
<rect x="1338" y="266" width="262" height="10.45" fill="#ec8b8b"/>
<rect x="-5" y="278" width="518" height="10.45" fill="#ec8b8b"/>
<rect x="633" y="278" width="690" height="10.45" fill="#ec8b8b"/>
<rect x="1353" y="278" width="247" height="10.45" fill="#ec8b8b"/>
<rect x="-5" y="290" width="263" height="10.45" fill="#ec8b8b"/>
<rect x="363" y="290" width="780" height="10.45" fill="#ec8b8b"/>
<rect x="1353" y="290" width="247" height="10.45" fill="#8f8fd8"/>
<rect x="-5" y="302" width="743" height="10.45" fill="#ec8b8b"/>
<rect x="1353" y="302" width="247" height="10.45" fill="#8f8fd8"/>
<rect x="-5" y="314" width="758" height="10.45" fill="#ec8b8b"/>
<rect x="1368" y="314" width="232" height="10.45" fill="#8f8fd8"/>
<rect x="-5" y="326" width="578" height="10.45" fill="#ec8b8b"/>
<rect x="618" y="326" width="810" height="10.45" fill="#8f8fd8"/>
<rect x="1473" y="326" width="127" height="10.45" fill="#ec8b8b"/>
<rect x="-5" y="338" width="248" height="10.45" fill="#ec8b8b"/>
<rect x="363" y="338" width="1125" height="10.45" fill="#ec8b8b"/>
<rect x="1488" y="338" width="112" height="10.45" fill="#8f8fd8"/>
<rect x="-5" y="350" width="248" height="10.45" fill="#8f8fd8"/>
<rect x="363" y="350" width="1125" height="10.45" fill="#ec8b8b"/>
<rect x="1503" y="350" width="97" height="10.45" fill="#8f8fd8"/>
<rect x="-5" y="362" width="293" height="10.45" fill="#ec8b8b"/>
<rect x="363" y="362" width="1125" height="10.45" fill="#8f8fd8"/>
<rect x="1518" y="362" width="82" height="10.45" fill="#ec8b8b"/>
<rect x="437.7" y="38" width="15.3" height="10.45" fill="#4747ff"/>
<text x="443.8" y="46.1" text-anchor="middle" font-family="Liberation Mono, monospace" font-weight="bold" font-size="12.6" fill="#000">C</text>
<rect x="737.7" y="122" width="15.3" height="10.45" fill="#00bf00"/>
<text x="743.8" y="130.1" text-anchor="middle" font-family="Liberation Mono, monospace" font-weight="bold" font-size="12.6" fill="#000">A</text>
<rect x="1382.7" y="122" width="15.3" height="10.45" fill="#00bf00"/>
<text x="1388.8" y="130.1" text-anchor="middle" font-family="Liberation Mono, monospace" font-weight="bold" font-size="12.6" fill="#000">A</text>
<rect x="827.7" y="254" width="15.3" height="10.45" fill="#ff0000"/>
<text x="833.8" y="262.1" text-anchor="middle" font-family="Liberation Mono, monospace" font-weight="bold" font-size="12.6" fill="#000">T</text>
<rect x="1547.7" y="362" width="15.3" height="10.45" fill="#ff0000"/>
<text x="1553.8" y="370.1" text-anchor="middle" font-family="Liberation Mono, monospace" font-weight="bold" font-size="12.6" fill="#000">T</text>
<rect x="1457.8" y="74" width="15" height="10.45" fill="#9e9e9e"/><text x="1463.7" y="85.2" text-anchor="middle" font-family="Liberation Mono, monospace" font-weight="bold" font-size="15" fill="#fff">*</text>
<polygon points="1571,362 1580,362 1576,366" fill="#7a18a8"/>
</svg>
<div class="tl" style="top:183.5px;width:274.5px;height:36.5px;"><span style="letter-spacing:0.7px">200k-pcc1_blast_result</span></div>
<svg class="abs" style="left:4.699999999999999px;top:190.85px" width="20" height="20" viewBox="0 0 20 20"><defs><linearGradient id="cg" x1="0" y1="0" x2="0" y2="1"><stop offset="0" stop-color="#c6c6c6"/><stop offset="1" stop-color="#aeaeae"/></linearGradient></defs><circle cx="10" cy="10" r="9" fill="url(#cg)"/><path d="M6 6 L14 14 M14 6 L6 14" stroke="#f4f4f4" stroke-width="2.3" stroke-linecap="round"/></svg>
<div class="tl" style="top:381.5px;width:175.5px;height:35.5px;color:#474747;border-color:#efefef;"><span style="letter-spacing:0.1px">1_Coverage</span></div>
<svg class="abs" style="left:4.699999999999999px;top:389.45px" width="20" height="20" viewBox="0 0 20 20"><defs><linearGradient id="cg" x1="0" y1="0" x2="0" y2="1"><stop offset="0" stop-color="#c6c6c6"/><stop offset="1" stop-color="#aeaeae"/></linearGradient></defs><circle cx="10" cy="10" r="9" fill="url(#cg)"/><path d="M6 6 L14 14 M14 6 L6 14" stroke="#f4f4f4" stroke-width="2.3" stroke-linecap="round"/></svg>
<div class="tl" style="top:561.5px;width:184px;height:35.5px;"><span style="letter-spacing:0.68px">6_Alignment</span></div>
<svg class="abs" style="left:4.699999999999999px;top:569.45px" width="20" height="20" viewBox="0 0 20 20"><defs><linearGradient id="cg" x1="0" y1="0" x2="0" y2="1"><stop offset="0" stop-color="#c6c6c6"/><stop offset="1" stop-color="#aeaeae"/></linearGradient></defs><circle cx="10" cy="10" r="9" fill="url(#cg)"/><path d="M6 6 L14 14 M14 6 L6 14" stroke="#f4f4f4" stroke-width="2.3" stroke-linecap="round"/></svg>
</body></html>
